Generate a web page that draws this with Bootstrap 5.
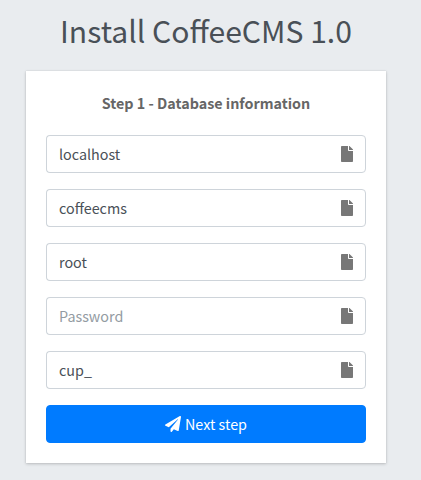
<!DOCTYPE html>
<html lang="en">
<head>
<meta charset="utf-8">
<meta name="viewport" content="width=device-width, initial-scale=1">
<title>Install CoffeeCMS 1.0</title>
<link href="https://cdn.jsdelivr.net/npm/bootstrap@5.3.0/dist/css/bootstrap.min.css" rel="stylesheet">
<style>
body{background:#e9ecef;font-family:"Source Sans Pro","Noto Sans CJK SC","Noto Sans",sans-serif;font-size:14.33px;line-height:24px;color:#495057;height:480px;overflow:hidden}
.install-box{width:360px;margin-left:26px;padding-top:5px}
.install-title{font-size:30.1px;line-height:50px;font-weight:400;margin-bottom:16px}
.install-card{border:0;border-radius:0;padding:20px;height:392px;box-shadow:0 0 1px rgba(0,0,0,.125),0 1px 3px rgba(0,0,0,.2)}
.step-text{color:#666;margin-bottom:20px;font-weight:700}
.install-card .input-group{height:38px;margin-bottom:16px}
.install-card .form-control{font-size:14.33px;line-height:24px;color:#495057;border-color:#ced4da;border-radius:4px 0 0 4px;border-right:0;padding:5px 12px 7px;height:38px}
.install-card .form-control::placeholder{color:#939ba2}
.install-card .input-group-text{background:#fff;border-color:#ced4da;border-radius:0 4px 4px 0;color:#777;padding:0 12px}
.btn-next{background:#007bff;border-color:#007bff;color:#fff;font-size:14.33px;line-height:24px;border-radius:4px;height:38px}
</style>
</head>
<body>
<main class="install-box">
<h1 class="install-title text-center">Install CoffeeCMS 1.0</h1>
<form class="card install-card">
<p class="step-text text-center">Step 1 - Database information</p>
<svg class="d-none"><symbol id="file" viewBox="0 0 384 512"><path fill="currentColor" d="M224 136V0H24C10.7 0 0 10.7 0 24v464c0 13.3 10.7 24 24 24h336c13.3 0 24-10.7 24-24V160H248c-13.2 0-24-10.8-24-24zm160-14.1v6.1H256V0h6.1c6.4 0 12.5 2.5 17 7l97.9 98c4.5 4.5 7 10.6 7 16.9z"/></symbol></svg>
<div class="input-group"><input class="form-control" type="text" value="localhost"><span class="input-group-text"><svg width="12" height="16"><use href="#file"/></svg></span></div>
<div class="input-group"><input class="form-control" type="text" value="coffeecms"><span class="input-group-text"><svg width="12" height="16"><use href="#file"/></svg></span></div>
<div class="input-group"><input class="form-control" type="text" value="root"><span class="input-group-text"><svg width="12" height="16"><use href="#file"/></svg></span></div>
<div class="input-group"><input class="form-control" type="text" placeholder="Password"><span class="input-group-text"><svg width="12" height="16"><use href="#file"/></svg></span></div>
<div class="input-group"><input class="form-control" type="text" value="cup_"><span class="input-group-text"><svg width="12" height="16"><use href="#file"/></svg></span></div>
<button class="btn btn-next w-100 d-flex align-items-center justify-content-center gap-1" type="button"><svg width="16" height="16" viewBox="0 0 512 512"><path fill="currentColor" d="M476 3.2L12.5 270.6c-18.1 10.4-15.8 35.6 2.2 43.2L121 358.4l287.3-253.2c5.5-4.9 13.3 2.6 8.6 8.3L176 407v80.5c0 23.6 28.5 32.9 42.5 15.8L282 426l124.6 52.2c14.2 6 30.4-2.9 33-18.2l72-432C515 7.8 493.3-6.8 476 3.2z"/></svg><span>Next step</span></button>
</form>
</main>
<script src="https://cdn.jsdelivr.net/npm/bootstrap@5.3.0/dist/js/bootstrap.bundle.min.js"></script>
</body>
</html>
